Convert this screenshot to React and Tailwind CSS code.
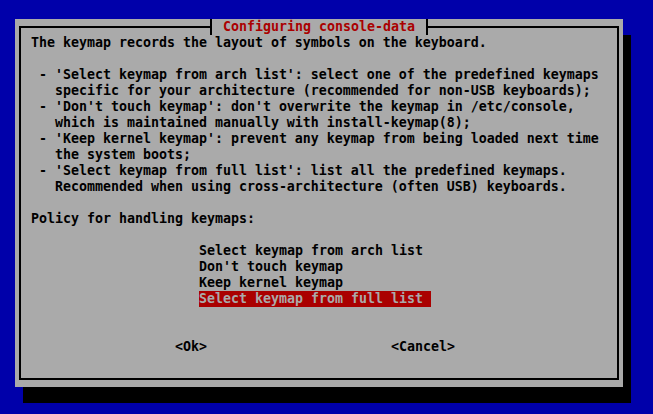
export default function App() {
  const font = { fontFamily: '"DejaVu Sans Mono", "Liberation Mono", monospace' };
  const intro = [
    "The keymap records the layout of symbols on the keyboard.",
    "",
    " - 'Select keymap from arch list': select one of the predefined keymaps",
    "   specific for your architecture (recommended for non-USB keyboards);",
    " - 'Don't touch keymap': don't overwrite the keymap in /etc/console,",
    "   which is maintained manually with install-keymap(8);",
    " - 'Keep kernel keymap': prevent any keymap from being loaded next time",
    "   the system boots;",
    " - 'Select keymap from full list': list all the predefined keymaps.",
    "   Recommended when using cross-architecture (often USB) keyboards.",
    "",
    "Policy for handling keymaps:",
    "",
  ];
  const items = [
    "Select keymap from arch list",
    "Don't touch keymap",
    "Keep kernel keymap",
    "Select keymap from full list",
  ];
  return (
    <div
      className="w-[653px] h-[414px] bg-[#0000aa] pl-[15px] pt-[19px] overflow-hidden font-bold text-[13.29px] leading-[16px] text-black"
      style={font}
    >
      <div className="w-[608px] h-[368px] bg-[#aaaaaa] shadow-[8px_16px_0_0_#000] pt-[7px] px-[4px]">
        <div className="relative h-[354px] border-2 border-black pl-[10px] pt-[7px]">
          <div className="absolute top-[-9px] left-[189px] h-[16px] bg-[#aaaaaa] border-x-2 border-black px-[11px] text-[#aa0000] whitespace-pre">
            Configuring console-data
          </div>
          {intro.map((l, i) => (
            <div key={i} className="h-[16px] whitespace-pre">
              {l}
            </div>
          ))}
          {items.map((l, i) => (
            <div
              key={i}
              className={
                i === 3
                  ? "ml-[168px] w-[232px] h-[16px] whitespace-pre bg-[#aa0000] text-[#aaaaaa]"
                  : "ml-[168px] h-[16px] whitespace-pre"
              }
            >
              {l}
            </div>
          ))}
          <div className="h-[32px]" />
          <div className="flex h-[16px] whitespace-pre">
            <span className="ml-[144px]">&lt;Ok&gt;</span>
            <span className="ml-[184px]">&lt;Cancel&gt;</span>
          </div>
        </div>
      </div>
    </div>
  );
}
